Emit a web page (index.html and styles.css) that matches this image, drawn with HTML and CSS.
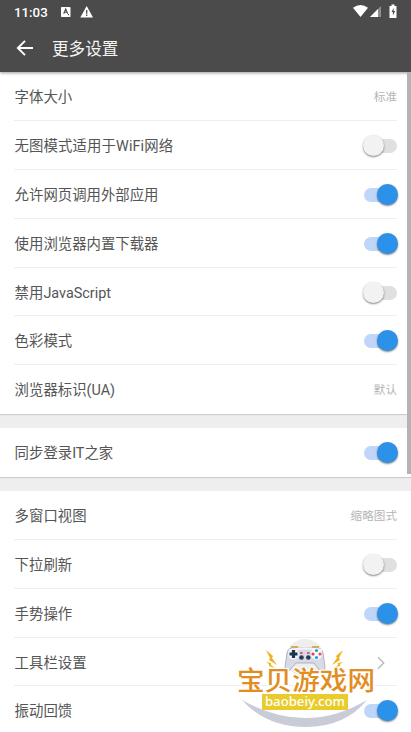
FILE: index.html
```html
<!DOCTYPE html>
<html lang="zh-CN">
<head>
<meta charset="utf-8">
<title>更多设置</title>
<link rel="stylesheet" href="styles.css">
</head>
<body>
<div class="screen">
  <header class="header">
    <div class="status">
      <span class="clock">11:03</span>
      <svg class="status-a" width="10" height="10" viewBox="0 0 10 10"><rect width="9.5" height="10" rx=".7" fill="#fff"/><path d="M2.7 6.7 4.7 2l2 4.7M3.5 5.3h2.5M7 7.6h1" fill="none" stroke="#4b4b4b" stroke-width="1.1"/></svg>
      <svg class="status-warn" width="14" height="12" viewBox="0 0 14 12"><path d="M6.7 0 13 11.5H.3Z" fill="#fff"/><path d="M6.7 4v3.7M6.7 8.6v1.5" stroke="#4b4b4b" stroke-width="1.3"/></svg>
      <svg class="status-right" width="46" height="15" viewBox="0 0 46 15"><path d="M0 3.7Q7.5-1.5 15 3.7L7.5 13Z" fill="#fff"/><path d="M28 2v11H17Z" fill="#8c8c8c"/><path d="M25 5v8h-8Z" fill="#fff"/><path d="M36.5 2h2V.5h3V2h2v12h-7Z" fill="#fff"/><path d="m40.6 4-2.1 4h1.4v3.4l2.3-4.3h-1.6Z" fill="#4b4b4b"/></svg>
    </div>
    <div class="titlebar">
      <svg width="18" height="18" viewBox="0 0 18 18"><path d="M17 9H2M9 1.8 1.8 9 9 16.2" fill="none" stroke="#fff" stroke-width="1.9"/></svg>
      <h1>更多设置</h1>
    </div>
  </header>
  <main>
    <section class="group">
      <div class="row"><span>字体大小</span><span class="value">标准</span></div>
      <div class="row"><span class="wide">无图模式适用于WiFi网络</span><i class="switch"></i></div>
      <div class="row"><span>允许网页调用外部应用</span><i class="switch on"></i></div>
      <div class="row"><span>使用浏览器内置下载器</span><i class="switch on"></i></div>
      <div class="row"><span>禁用JavaScript</span><i class="switch"></i></div>
      <div class="row"><span>色彩模式</span><i class="switch on"></i></div>
      <div class="row"><span>浏览器标识(UA)</span><span class="value">默认</span></div>
    </section>
    <section class="group">
      <div class="row"><span>同步登录IT之家</span><i class="switch on"></i></div>
    </section>
    <section class="group">
      <div class="row"><span>多窗口视图</span><span class="value">缩略图式</span></div>
      <div class="row"><span>下拉刷新</span><i class="switch"></i></div>
      <div class="row"><span>手势操作</span><i class="switch on"></i></div>
      <div class="row"><span>工具栏设置</span><svg class="chevron" width="8" height="14" viewBox="0 0 8 14"><path d="m1 1.3 5.7 5.7L1 12.7" fill="none" stroke="#bcbcbc" stroke-width="1.5"/></svg></div>
      <div class="row"><span>振动回馈</span><i class="switch on"></i></div>
    </section>
  </main>
  <div class="scrollbar"></div>
  <div class="watermark">
    <svg width="150" height="92" viewBox="0 0 150 92">
      <circle cx="69" cy="20" r="19" fill="#eeeeef"/>
      <path d="M6 62Q70 98 131 62Q109 89 70 89Q30 89 6 62Z" fill="#c9cbd9"/>
      <g fill="#f0b31c"><path d="m30 12 7 6-1 2 5 7-8-5 1-2Z"/><path d="m30 24 5 1v2l4 3-6-2v-2Z"/><path d="m107 12-7 6 1 2-5 7 8-5-1-2Z"/><path d="m107 24-5 1v2l-4 3 6-2v-2Z"/></g>
      <path d="M55 8h7v3h-7zM76 8h7v3h-7z" fill="#e3ae35"/>
      <path d="M51 15Q52 9 59 10H79Q86 9 87 15L89 29Q89 37 84 33L78 25H60L53 33Q49 38 49 29Z" fill="#d9dae6" stroke="#a4a6b9" stroke-width=".8"/>
      <path d="M53 12Q69 9 86 12" fill="none" stroke="#f5f5fc" stroke-width="2"/>
      <circle cx="57.5" cy="16" r="5.5" fill="#f4f4fa"/>
      <path d="M57.5 12v8M53.5 16h8" stroke="#17384b" stroke-width="3.2"/>
      <circle cx="80.5" cy="16" r="5.7" fill="#f8f8ff"/><circle cx="80.5" cy="12.5" r="1.6" fill="#1aaab3"/><circle cx="80.5" cy="19.5" r="1.6" fill="#259dcd"/><circle cx="77" cy="16" r="1.6" fill="#da4055"/><circle cx="84" cy="16" r="1.6" fill="#e2515c"/>
      <circle cx="65.5" cy="19.5" r="2.3" fill="#223f50"/><circle cx="72.3" cy="19.5" r="2.3" fill="#223f50"/><path d="M64 15h2.6M71 15h2.6" stroke="#cf365b" stroke-width="1.3"/>
    </svg>
    <div class="wm-name">宝贝游戏网</div>
    <div class="wm-url">baobeiy.com</div>
  </div>
</div>
</body>
</html>
```
FILE: styles.css
```css
* { box-sizing: border-box; }
body { margin: 0; overflow: hidden; }
.screen {
  position: relative;
  width: 411px;
  height: 732px;
  overflow: hidden;
  background: #eee;
  color: #555;
  font-family: Roboto, "Noto Sans CJK SC", sans-serif;
}
.header {
  position: relative;
  z-index: 1;
  height: 72px;
  background: #4b4b4b;
  color: #fff;
  box-shadow: 0 1px 3px rgba(0, 0, 0, .4);
}
.status { height: 24px; display: flex; align-items: center; padding: 0 14px; }
.clock { width: 47px; font-size: 13.3px; font-weight: 500; }
.status-warn { margin-left: 9px; }
.status-right { margin: -2px -2px 0 auto; }
.titlebar { height: 48px; display: flex; align-items: center; padding-left: 16px; }
h1 { margin: 0 0 0 18px; padding-top: 3px; font-size: 16.6px; line-height: 24px; font-weight: 400; color: #f5f5f5; }
main { padding-top: .5px; background: #fff; }
.group {
  margin-bottom: 14.2px;
  background: #fff;
  box-shadow: 0 1px 1px #ccc, 0 15px #eee;
}
.row {
  height: 48.8px;
  margin: 0 14px;
  display: flex;
  align-items: center;
  justify-content: space-between;
  padding: 2px 0 0 .6px;
  border-bottom: 1px solid #eee;
  font-size: 14.4px;
  line-height: 22px;
}
.row > span { padding-top: 2px; }
.row .wide { letter-spacing: .1px; }
.row:last-child { border-color: transparent; }
.row .value { padding-top: 0; color: #b5b5b5; font-size: 11.6px; }
.switch {
  position: relative;
  width: 33px;
  height: 14px;
  border-radius: 7px;
  background: #e0e0e0;
}
.switch::after {
  content: "";
  position: absolute;
  top: -4px;
  left: -1px;
  width: 21px;
  height: 21px;
  border-radius: 50%;
  background: #f2f2f2;
  box-shadow: 0 1px 2px rgba(0, 0, 0, .5);
}
.switch.on { background: #c0d6f8; }
.switch.on::after { left: 13px; background: #2b91e9; }
.chevron { margin-right: 12px; }
.scrollbar { position: absolute; z-index: 2; top: 72px; right: 0; width: 4px; height: 402px; background: #b3b3b3; }
.watermark { position: absolute; z-index: 3; left: 236px; top: 638px; width: 150px; height: 92px; }
.watermark svg { display: block; }
.wm-name {
  position: absolute;
  left: 1px;
  top: 27px;
  color: #e28d22;
  font: 500 27.6px/28px "Noto Sans CJK SC", sans-serif;
  white-space: nowrap;
  text-shadow: -1px -1px #fff, 1px -1px #fff, -1px 1px #fff, 1px 1px #fff;
  transform: scaleY(.93);
}
.wm-url {
  position: absolute;
  left: 26px;
  top: 56px;
  width: 86px;
  height: 16px;
  background: #e9cb2b;
  color: #fff;
  font: 500 13.2px/15px "Noto Sans", sans-serif;
  text-align: center;
}
```
